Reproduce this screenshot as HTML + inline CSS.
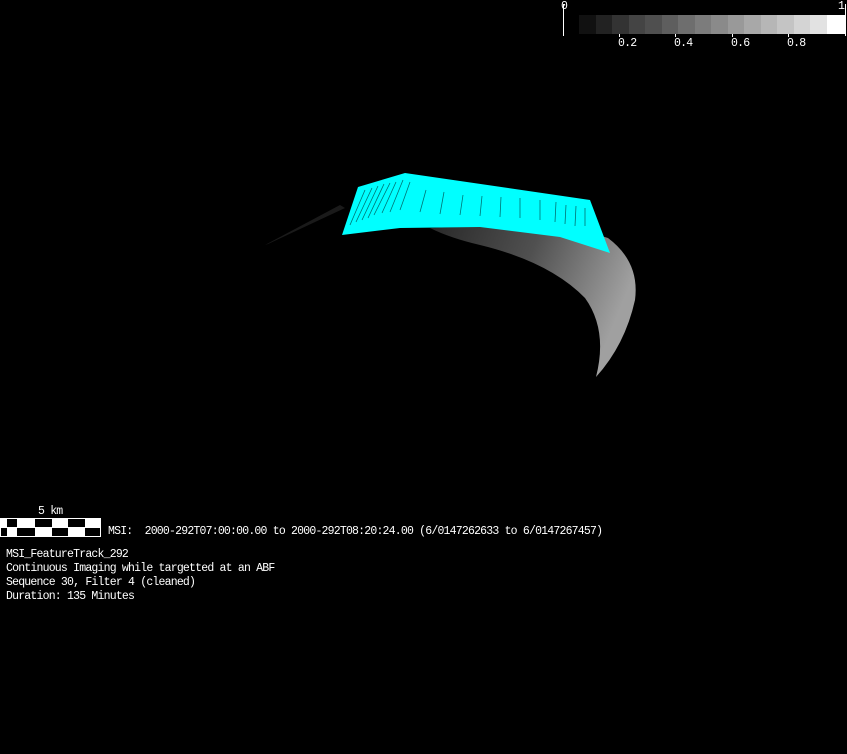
<!DOCTYPE html>
<html><head><style>
html,body{margin:0;padding:0;background:#000;width:847px;height:754px;overflow:hidden}
.t{position:absolute;color:#fff;font-family:"Liberation Mono",monospace;font-size:11.5px;letter-spacing:-0.8px;white-space:pre;line-height:14px}
</style></head><body>
<svg width="847" height="754" style="position:absolute;left:0;top:0">
<defs>
<linearGradient id="g" x1="0" y1="0" x2="1" y2="0.3">
<stop offset="0" stop-color="#282828"/><stop offset="0.5" stop-color="#505050"/><stop offset="0.8" stop-color="#808080"/><stop offset="1" stop-color="#a0a0a0"/>
</linearGradient>
</defs>
<path d="M265,245 L340,205 L345,208 L268,244 Z" fill="#1a1a1a"/>
<path d="M430,228 Q560,222 608,238 Q640,262 635,300 Q625,345 596,377 Q608,330 585,298 Q550,262 480,245 Q450,238 430,228 Z" fill="url(#g)"/>
<polygon points="342,235 358,187 405,173 590,200 610,253 560,237 480,227 400,228" fill="#00ffff"/>
<g stroke="#000" stroke-width="0.8" opacity="0.55">
<path d="M350,225 L365,190 M356,222 L372,188 M362,220 L378,186 M368,218 L384,184 M374,215 L390,183 M382,213 L396,182 M390,212 L403,180 M400,210 L410,182 M420,212 L426,190 M440,214 L444,192 M460,215 L463,195 M480,216 L482,196 M500,217 L501,197 M520,218 L520,198 M540,220 L540,200 M555,222 L556,202 M565,224 L566,205 M575,226 L576,206 M585,226 L585,208"/>
</g>
<rect x="563" y="4" width="1" height="32" fill="#fff"/>
<rect x="845" y="4" width="1" height="32" fill="#fff"/>
<g>
<rect x="579" y="15" width="17" height="19" fill="#111"/><rect x="596" y="15" width="16" height="19" fill="#222"/><rect x="612" y="15" width="17" height="19" fill="#333"/><rect x="629" y="15" width="16" height="19" fill="#444"/><rect x="645" y="15" width="17" height="19" fill="#4f4f4f"/><rect x="662" y="15" width="16" height="19" fill="#5e5e5e"/><rect x="678" y="15" width="17" height="19" fill="#6e6e6e"/><rect x="695" y="15" width="16" height="19" fill="#7c7c7c"/><rect x="711" y="15" width="17" height="19" fill="#8a8a8a"/><rect x="728" y="15" width="16" height="19" fill="#999"/><rect x="744" y="15" width="17" height="19" fill="#a8a8a8"/><rect x="761" y="15" width="16" height="19" fill="#b6b6b6"/><rect x="777" y="15" width="17" height="19" fill="#c4c4c4"/><rect x="794" y="15" width="16" height="19" fill="#d4d4d4"/><rect x="810" y="15" width="17" height="19" fill="#e2e2e2"/><rect x="827" y="15" width="18" height="19" fill="#fff"/>
</g>
<rect x="619" y="34" width="1" height="3" fill="#fff"/><rect x="675" y="34" width="1" height="3" fill="#fff"/><rect x="732" y="34" width="1" height="3" fill="#fff"/><rect x="788" y="34" width="1" height="3" fill="#fff"/>
<rect x="0" y="518" width="101" height="19" fill="#fff"/>
<rect x="7" y="519" width="10" height="8" fill="#000"/><rect x="35" y="519" width="17" height="8" fill="#000"/><rect x="68" y="519" width="17" height="8" fill="#000"/>
<rect x="1" y="528" width="6" height="8" fill="#000"/><rect x="17" y="528" width="18" height="8" fill="#000"/><rect x="52" y="528" width="16" height="8" fill="#000"/><rect x="85" y="528" width="15" height="8" fill="#000"/>
</svg>
<div class="t" style="left:561px;top:0px">0</div>
<div class="t" style="left:838px;top:0px">1</div>
<div class="t" style="left:618px;top:37px">0.2</div>
<div class="t" style="left:674px;top:37px">0.4</div>
<div class="t" style="left:731px;top:37px">0.6</div>
<div class="t" style="left:787px;top:37px">0.8</div>
<div class="t" style="left:38px;top:505px">5 km</div>
<div class="t" style="left:108px;top:525px">MSI:  2000-292T07:00:00.00 to 2000-292T08:20:24.00 (6/0147262633 to 6/0147267457)</div>
<div class="t" style="left:6px;top:548px">MSI_FeatureTrack_292
Continuous Imaging while targetted at an ABF
Sequence 30, Filter 4 (cleaned)
Duration: 135 Minutes</div>
</body></html>
